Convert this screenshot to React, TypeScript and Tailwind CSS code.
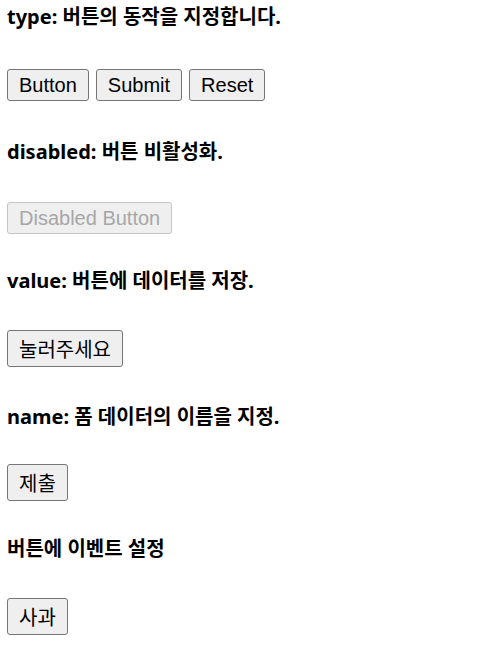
import React from "react";

const headingCls =
  "text-[20px] leading-[28px] font-bold text-black whitespace-nowrap";
const headingFont = {
  fontFamily: '"Noto Sans", "Noto Sans CJK KR", sans-serif',
};

function Btn({
  children,
  disabled,
  korean,
}: {
  children: React.ReactNode;
  disabled?: boolean;
  korean?: boolean;
}) {
  return (
    <button
      disabled={disabled}
      className={
        "box-border flex items-center justify-center rounded-[3px] border px-[11px] text-[20px] leading-none " +
        (korean ? "h-[37px] " : "h-[32px] ") +
        (disabled
          ? "border-[#c6c6c6] bg-[#efefef] text-[#a7a7a7]"
          : "border-[#767676] bg-[#efefef] text-black")
      }
      style={{
        fontFamily: korean
          ? '"Noto Sans CJK KR", sans-serif'
          : '"Liberation Sans", Arial, sans-serif',
      }}
    >
      {children}
    </button>
  );
}

export default function App() {
  return (
    <div className="flex flex-col bg-white px-[7px] pt-[3px]">
      <div className={headingCls} style={headingFont}>
        type: 버튼의 동작을 지정합니다.
      </div>
      <div className="mt-[38px] flex gap-[7px]">
        <Btn>Button</Btn>
        <Btn>Submit</Btn>
        <Btn>Reset</Btn>
      </div>

      <div className={"mt-[37px] " + headingCls} style={headingFont}>
        disabled: 버튼 비활성화.
      </div>
      <div className="mt-[36px] flex">
        <Btn disabled>Disabled Button</Btn>
      </div>

      <div className={"mt-[33px] " + headingCls} style={headingFont}>
        value: 버튼에 데이터를 저장.
      </div>
      <div className="mt-[35px] flex">
        <Btn korean>눌러주세요</Btn>
      </div>

      <div className={"mt-[36px] " + headingCls} style={headingFont}>
        name: 폼 데이터의 이름을 지정.
      </div>
      <div className="mt-[33px] flex">
        <Btn korean>제출</Btn>
      </div>

      <div className={"mt-[34px] " + headingCls} style={headingFont}>
        버튼에 이벤트 설정
      </div>
      <div className="mt-[35px] flex">
        <Btn korean>사과</Btn>
      </div>
    </div>
  );
}
